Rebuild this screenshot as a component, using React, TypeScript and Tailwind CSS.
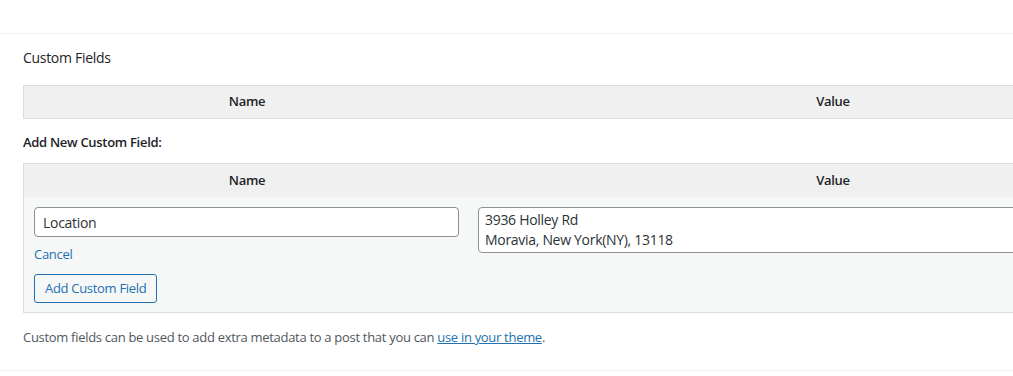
import React from "react";

export default function App() {
  return (
    <div className="w-[1013px] h-[376px] overflow-hidden bg-white text-[13px] text-[#1d2327] tracking-[-0.3px]" style={{ fontFamily: '"Open Sans", "Noto Sans", sans-serif' }}>
      <div className="h-[33px]" />
      <div className="border-t border-[#f0f0f1] border-b pb-[23px]">
        <div className="pl-[23px]">
          <h2 className="text-[14px] leading-[20px] pt-[14px] pb-[17px] text-[#1d2327]">Custom Fields</h2>

          <div className="w-[1180px] flex border border-[#dcdcde] bg-[#f0f0f1] h-[34px] items-center font-semibold">
            <div className="w-[446px] text-center">Name</div>
            <div className="w-[726px] text-center">Value</div>
          </div>

          <p className="font-semibold text-[#1d2327] mt-[13px] mb-[11px] leading-[20px]">Add New Custom Field:</p>

          <div className="w-[1180px] border border-[#dcdcde] bg-[#f6f7f7]">
            <div className="flex bg-[#f0f0f1] h-[33px] items-center font-semibold">
              <div className="w-[446px] text-center">Name</div>
              <div className="w-[726px] text-center">Value</div>
            </div>
            <div className="flex pt-[10px] pb-[9px]">
              <div className="w-[446px] pl-[10px] pr-[10px] flex flex-col items-start">
                <input
                  defaultValue="Location"
                  className="w-[425px] h-[30px] px-[8px] text-[14px] tracking-[-0.3px] bg-white border border-[#8c8f94] rounded-[4px] text-[#2c3338] outline-none"
                />
                <a href="#" className="text-[#2271b1] text-[13px] mt-[6px] leading-[22px]">Cancel</a>
                <button className="mt-[9px] h-[29px] px-[10px] text-[13px] tracking-[-0.3px] text-[#2271b1] border border-[#2271b1] rounded-[3px] bg-[#f6f7f7]">
                  Add Custom Field
                </button>
              </div>
              <div className="w-[726px] pl-[8px]">
                <textarea
                  defaultValue={"3936 Holley Rd\nMoravia, New York(NY), 13118"}
                  className="block w-[700px] h-[46px] px-[6px] py-[2px] text-[14px] tracking-[-0.3px] leading-[20px] bg-white border border-[#8c8f94] rounded-[4px] text-[#2c3338] resize-none outline-none overflow-hidden"
                />
              </div>
            </div>
          </div>

          <p className="mt-[14px] leading-[20px] text-[#50575e]">
            Custom fields can be used to add extra metadata to a post that you can{" "}
            <a href="#" className="text-[#2271b1] underline">use in your theme</a>.
          </p>
        </div>
      </div>
    </div>
  );
}
